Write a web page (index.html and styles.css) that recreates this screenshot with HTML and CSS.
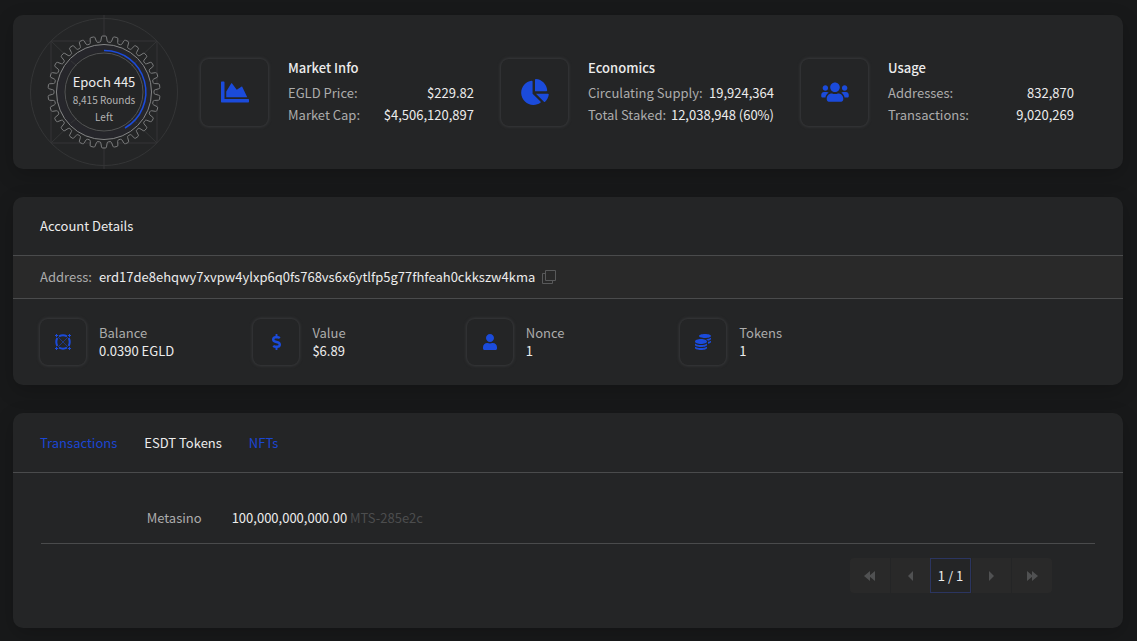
FILE: index.html
```
<!DOCTYPE html>
<html lang="en">
<head>
  <meta charset="UTF-8">
  <meta name="viewport" content="width=device-width, initial-scale=1.0">
  <title>Account Details</title>
  <link rel="stylesheet" href="styles.css">
</head>
<body>
  <main>
    <section class="card hero">
      <div class="epoch">
        <svg class="epoch-gear" viewBox="-77 -77 154 154" aria-hidden="true">
          <g class="guides">
            <circle r="73.5"/>
            <path d="M0-77V77M-53-51H53V51H-53ZM-53-51L53 51M53-51L-53 51"/>
          </g>
          <path id="gear" class="gear"/>
          <circle class="band" r="43.5"/>
          <circle class="ring" r="47.5"/>
          <path class="guides" d="M-33-31L-27-26M33-31L27-26M-33 31L-27 26M33 31L27 26"/>
          <circle class="ring-inner" r="39"/>
          <path class="progress" d="M0-41.5A41.5 41.5 0 0 1 21 36"/>
        </svg>
        <div class="epoch-text">
          <span class="epoch-title">Epoch 445</span>
          <span class="epoch-left">8,415 Rounds Left</span>
        </div>
      </div>
      <div class="stats">
        <div class="stat">
          <div class="icon-box large">
            <svg width="28" height="28" viewBox="0 0 512 512"><path d="M500 384c6.600 0 12 5.400 12 12v40c0 6.600-5.400 12-12 12H12c-6.600 0-12-5.400-12-12V76c0-6.600 5.400-12 12-12h40c6.600 0 12 5.400 12 12v308h436zM372.700 159.500L288 216l-85.300-113.700c-5.100-6.800-15.500-6.300-19.900 1L96 248v104h384l-89.900-187.800c-3.200-6.500-11.400-8.700-17.400-4.700z"/></svg>
          </div>
          <div class="stat-info">
            <h2>Market Info</h2>
            <dl>
              <div><dt>EGLD Price:</dt><dd>$229.82</dd></div>
              <div><dt>Market Cap:</dt><dd>$4,506,120,897</dd></div>
            </dl>
          </div>
        </div>
        <div class="stat">
          <div class="icon-box large">
            <svg width="28" height="26" viewBox="0 0 544 512"><path d="M527.790 288H290.500l158.030 158.030c6.040 6.040 15.980 6.530 22.190.68 38.700-36.460 65.320-85.610 73.130-140.860 1.340-9.460-6.510-17.850-16.060-17.850zm-15.830-64.800C503.720 103.740 408.260 8.280 288.800.04 279.680-.59 272 7.100 272 16.240V240h223.770c9.140 0 16.820-7.680 16.190-16.800zM224 288V50.710c0-9.550-8.390-17.400-17.840-16.060C86.990 51.490-4.100 155.600.14 280.370 4.500 408.510 114.830 513.590 243.030 511.980c50.400-.63 96.970-16.870 135.260-44.030 7.900-5.600 8.420-17.230 1.570-24.080L224 288z"/></svg>
          </div>
          <div class="stat-info">
            <h2>Economics</h2>
            <dl>
              <div><dt>Circulating Supply:</dt><dd>19,924,364</dd></div>
              <div><dt>Total Staked:</dt><dd>12,038,948 (60%)</dd></div>
            </dl>
          </div>
        </div>
        <div class="stat">
          <div class="icon-box large">
            <svg width="28" height="22" viewBox="0 0 640 512"><path d="M96 224c35.300 0 64-28.700 64-64s-28.700-64-64-64-64 28.700-64 64 28.700 64 64 64zm448 0c35.300 0 64-28.700 64-64s-28.700-64-64-64-64 28.700-64 64 28.700 64 64 64zm32 32h-64c-17.600 0-33.500 7.100-45.100 18.600 40.300 22.100 68.900 62 75.100 109.400h66c17.700 0 32-14.300 32-32v-32c0-35.300-28.700-64-64-64zm-256 0c61.900 0 112-50.100 112-112S381.900 32 320 32 208 82.100 208 144s50.100 112 112 112zm76.800 32h-8.300c-20.800 10-43.900 16-68.500 16s-47.600-6-68.500-16h-8.300C179.600 288 128 339.600 128 403.200V432c0 26.500 21.500 48 48 48h288c26.500 0 48-21.500 48-48v-28.800c0-63.600-51.600-115.200-115.200-115.200zm-223.700-13.400C161.500 263.100 145.600 256 128 256H64c-35.300 0-64 28.700-64 64v32c0 17.700 14.300 32 32 32h65.900c6.300-47.400 34.900-87.300 75.200-109.400z"/></svg>
          </div>
          <div class="stat-info">
            <h2>Usage</h2>
            <dl>
              <div><dt>Addresses:</dt><dd>832,870</dd></div>
              <div><dt>Transactions:</dt><dd>9,020,269</dd></div>
            </dl>
          </div>
        </div>
      </div>
    </section>

    <section class="card">
      <h1 class="card-header">Account Details</h1>
      <div class="address-row">
        <span class="label">Address:</span>
        <span class="address">erd17de8ehqwy7xvpw4ylxp6q0fs768vs6x6ytlfp5g77fhfeah0ckkszw4kma</span>
        <button class="copy" aria-label="Copy address">
          <svg width="14" height="14" viewBox="0 0 14 14"><path d="M3.500.5h10v10h-10zM3 3.500H.5v10h10V11"/></svg>
        </button>
      </div>
      <div class="details">
        <div class="detail">
          <div class="icon-box">
            <svg width="16" height="16" viewBox="0 0 16 16">
              <path d="M1 0h1v1h1v1h-1v1h-1v-1h-1v-1h1zM14 0h1v1h1v1h-1v1h-1v-1h-1v-1h1zM1 13h1v1h1v1h-1v1h-1v-1h-1v-1h1zM14 13h1v1h1v1h-1v1h-1v-1h-1v-1h1z"/>
              <path class="egld-ring" d="M4 2.300Q8 .3 12 2.300M13.700 4Q15.700 8 13.700 12M12 13.700Q8 15.700 4 13.700M2.300 12Q.3 8 2.300 4"/>
              <path class="egld-cross" d="M3 3L13 13M13 3L3 13"/>
            </svg>
          </div>
          <div><div class="label">Balance</div><div>0.0390 EGLD</div></div>
        </div>
        <div class="detail">
          <div class="icon-box">
            <svg width="9" height="16" viewBox="0 0 288 512"><path d="M209.200 233.400l-108-31.600C88.700 198.200 80 186.500 80 173.500c0-16.300 13.200-29.500 29.500-29.500h66.300c12.200 0 24.200 3.700 34.200 10.500 6.100 4.100 14.300 3.100 19.500-2l34.800-34c7.100-6.900 6.100-18.400-1.800-24.500C238 74.800 207.400 64.100 176 64V16c0-8.800-7.200-16-16-16h-32c-8.800 0-16 7.200-16 16v48h-2.500C45.800 64-5.400 118.700.5 183.600c4.200 46.100 39.400 83.600 83.800 96.600l102.500 30c12.500 3.700 21.200 15.300 21.200 28.300 0 16.300-13.200 29.500-29.500 29.500h-66.300C100 368 88 364.300 78 357.500c-6.100-4.100-14.300-3.100-19.500 2l-34.800 34c-7.100 6.900-6.100 18.400 1.800 24.500 24.500 19.200 55.100 29.900 86.500 30v48c0 8.800 7.200 16 16 16h32c8.800 0 16-7.200 16-16v-48.200c46.600-.9 90.300-28.600 105.700-72.700 21.500-61.600-14.600-124.800-72.500-141.700z"/></svg>
          </div>
          <div><div class="label">Value</div><div>$6.89</div></div>
        </div>
        <div class="detail">
          <div class="icon-box">
            <svg width="14" height="16" viewBox="0 0 448 512"><path d="M224 256c70.700 0 128-57.300 128-128S294.700 0 224 0 96 57.300 96 128s57.300 128 128 128zm89.600 32h-16.700c-22.200 10.200-46.900 16-72.900 16s-50.600-5.800-72.900-16h-16.700C60.200 288 0 348.200 0 422.400V464c0 26.500 21.500 48 48 48h352c26.500 0 48-21.500 48-48v-41.600c0-74.200-60.200-134.400-134.400-134.400z"/></svg>
          </div>
          <div><div class="label">Nonce</div><div>1</div></div>
        </div>
        <div class="detail">
          <div class="icon-box">
            <svg width="16" height="16" viewBox="0 0 512 512"><path d="M0 405.300V448c0 35.300 86 64 192 64s192-28.700 192-64v-42.700C342.700 434.400 267.200 448 192 448S41.300 434.400 0 405.300zM320 128c106 0 192-28.700 192-64S426 0 320 0 128 28.700 128 64s86 64 192 64zM0 300.400V352c0 35.300 86 64 192 64s192-28.700 192-64v-51.600c-41.300 34-116.900 51.600-192 51.600S41.300 334.400 0 300.400zm416 11c57.300-11.100 96-31.700 96-55.400v-42.700c-23.200 16.400-57.300 27.600-96 34.500v63.600zM192 160C86 160 0 195.800 0 240s86 80 192 80 192-35.800 192-80-86-80-192-80zm219.300 56.300c60-10.800 100.700-32 100.700-56.300v-42.700c-35.500 25.100-96.500 38.600-160.700 41.800 29.500 14.300 51.200 33.500 60 57.200z"/></svg>
          </div>
          <div><div class="label">Tokens</div><div>1</div></div>
        </div>
      </div>
    </section>

    <section class="card">
      <nav class="card-header tabs">
        <a href="#transactions">Transactions</a>
        <a href="#tokens" class="active">ESDT Tokens</a>
        <a href="#nfts">NFTs</a>
      </nav>
      <div class="tokens">
        <div class="token-row">
          <div class="token-name">Metasino</div>
          <div class="token-value">100,000,000,000.00 <span class="token-id">MTS-285e2c</span></div>
        </div>
        <div class="pager">
          <button disabled aria-label="First page"><svg width="12" height="10" viewBox="0 0 12 10"><path d="M6 0v10L0 5zM11 0v10L5 5z"/></svg></button>
          <button disabled aria-label="Previous page"><svg width="12" height="10" viewBox="0 0 12 10"><path d="M8 0v10L3 5z"/></svg></button>
          <button class="current">1 / 1</button>
          <button disabled aria-label="Next page"><svg width="12" height="10" viewBox="0 0 12 10"><path d="M3 0v10L8 5z"/></svg></button>
          <button disabled aria-label="Last page"><svg width="12" height="10" viewBox="0 0 12 10"><path d="M1 0v10L7 5zM6 0v10L12 5z"/></svg></button>
        </div>
      </div>
    </section>
  </main>

  <script>
    // outline of the epoch gear, one tooth every 12 degrees
    const TEETH = 30;
    const OUTER = 56;
    const ROOT = 50;

    function point(radius, degrees) {
      const a = (degrees - 90) * Math.PI / 180;
      return (radius * Math.cos(a)).toFixed(2) + " " + (radius * Math.sin(a)).toFixed(2);
    }

    let d = "";
    for (let i = 0; i < TEETH; i++) {
      const c = i * 360 / TEETH;
      d += (i ? "L" : "M") + point(ROOT, c - 5);
      d += "Q" + point(ROOT, c - 3.8) + " " + point(ROOT + 1.2, c - 3.5);
      d += "L" + point(OUTER - 1, c - 2.6);
      d += "Q" + point(OUTER, c - 2.4) + " " + point(OUTER, c - 1.4);
      d += "L" + point(OUTER, c + 1.4);
      d += "Q" + point(OUTER, c + 2.4) + " " + point(OUTER - 1, c + 2.6);
      d += "L" + point(ROOT + 1.2, c + 3.5);
      d += "Q" + point(ROOT, c + 3.8) + " " + point(ROOT, c + 5);
    }
    document.getElementById("gear").setAttribute("d", d + "Z");
  </script>
</body>
</html>
```
FILE: styles.css
```
* {
  box-sizing: border-box;
}

body {
  margin: 0;
  padding: 15px 14px 13px 13px;
  background: #18191a;
  color: #ececec;
  font-family: "Noto Sans CJK SC", "Open Sans", sans-serif;
  font-size: 13px;
  line-height: 18px;
}

main {
  display: flex;
  flex-direction: column;
  gap: 28px;
}

h1, h2, dl, dd {
  margin: 0;
  font-size: 13px;
}

a {
  color: #1b46d3;
  text-decoration: none;
}

button {
  margin: 0;
  padding: 0;
  border: none;
  background: none;
  color: inherit;
  font: inherit;
  cursor: pointer;
}

svg {
  display: block;
}

.card {
  background: #242526;
  border-radius: 10px;
  box-shadow: 0 6px 20px rgba(0, 0, 0, 0.2);
}

.label, dt {
  color: #acacac;
}

.icon-box {
  display: flex;
  flex: none;
  align-items: center;
  justify-content: center;
  width: 46px;
  height: 46px;
  border-radius: 8px;
  box-shadow: 0 0 3px 1px #38393b;
  fill: #1b4bdb;
}

.icon-box.large {
  width: 67px;
  height: 67px;
}

/* Hero */
.hero {
  display: flex;
  align-items: center;
  padding: 0 22px 0 14px;
}

.epoch {
  position: relative;
  flex: none;
  width: 154px;
  height: 154px;
}

.epoch-gear {
  width: 100%;
  height: 100%;
  fill: none;
}

.guides {
  stroke: #343536;
}

.gear {
  fill: #242526;
  stroke: #7c7d7e;
}

.band {
  stroke: #26262b;
  stroke-width: 7;
}

.ring {
  stroke: #858687;
}

.ring-inner {
  stroke: #535455;
}

.progress {
  stroke: #1b4bdb;
  stroke-width: 1.5;
}

.epoch-text {
  position: absolute;
  inset: 0;
  display: flex;
  flex-direction: column;
  align-items: center;
  padding: 58px 40px 0;
  text-align: center;
}

.epoch-left {
  color: #b4b4b4;
  font-size: 10px;
  line-height: 17px;
}

.stats {
  display: grid;
  flex: 1;
  grid-template-columns: repeat(3, 1fr);
  margin-left: 20px;
}

.stat {
  display: flex;
  align-items: center;
  gap: 20px;
  padding-right: 27px;
}

.stat-info {
  flex: 1;
}

.stat h2 {
  font-weight: 500;
  margin-bottom: 5px;
}

dl div {
  display: flex;
  justify-content: space-between;
  line-height: 22px;
}

/* Account details */
.card-header {
  padding: 20px 27px;
  border-bottom: 1px solid #4a4b4c;
  font-weight: 400;
}

.address-row {
  display: flex;
  align-items: center;
  padding: 12px 27px;
  border-bottom: 1px solid #4a4b4c;
  background: #292929;
}

.address {
  margin: 0 7px;
}

.copy svg {
  fill: none;
  stroke: #58595a;
}

.details {
  display: grid;
  grid-template-columns: repeat(5, 1fr);
  padding: 20px 16px 20px 27px;
}

.detail {
  display: flex;
  align-items: center;
  gap: 13px;
}

.egld-ring {
  fill: none;
  stroke: #1b4bdb;
  stroke-width: 2;
}

.egld-cross {
  fill: none;
  stroke: #1b4bdb;
  stroke-width: 0.5;
}

/* Tokens */
.tabs {
  display: flex;
  gap: 27px;
  padding-top: 21px;
}

.tabs .active {
  color: #ececec;
}

.tokens {
  padding: 28px;
}

.token-row {
  display: grid;
  grid-template-columns: 1fr 5fr;
  padding: 8px 0 16px;
  border-bottom: 1px solid #4a4b4c;
}

.token-name {
  padding-right: 15px;
  color: #acacac;
  text-align: right;
}

.token-value {
  padding-left: 15px;
}

.token-id {
  color: #4c4d4e;
}

.pager {
  display: flex;
  justify-content: flex-end;
  margin: 14px 43px 7px 0;
}

.pager button {
  display: flex;
  align-items: center;
  justify-content: center;
  width: 40px;
  height: 35px;
  background: #292929;
  fill: #505152;
}

.pager button + button {
  border-left: 1px solid #242526;
}

.pager button:first-child {
  border-radius: 4px 0 0 4px;
}

.pager button:last-child {
  width: 41px;
  border-radius: 0 4px 4px 0;
}

.pager .current,
.pager button + .current {
  width: 41px;
  background: #242526;
  border: 1px solid #2b3560;
}
```
